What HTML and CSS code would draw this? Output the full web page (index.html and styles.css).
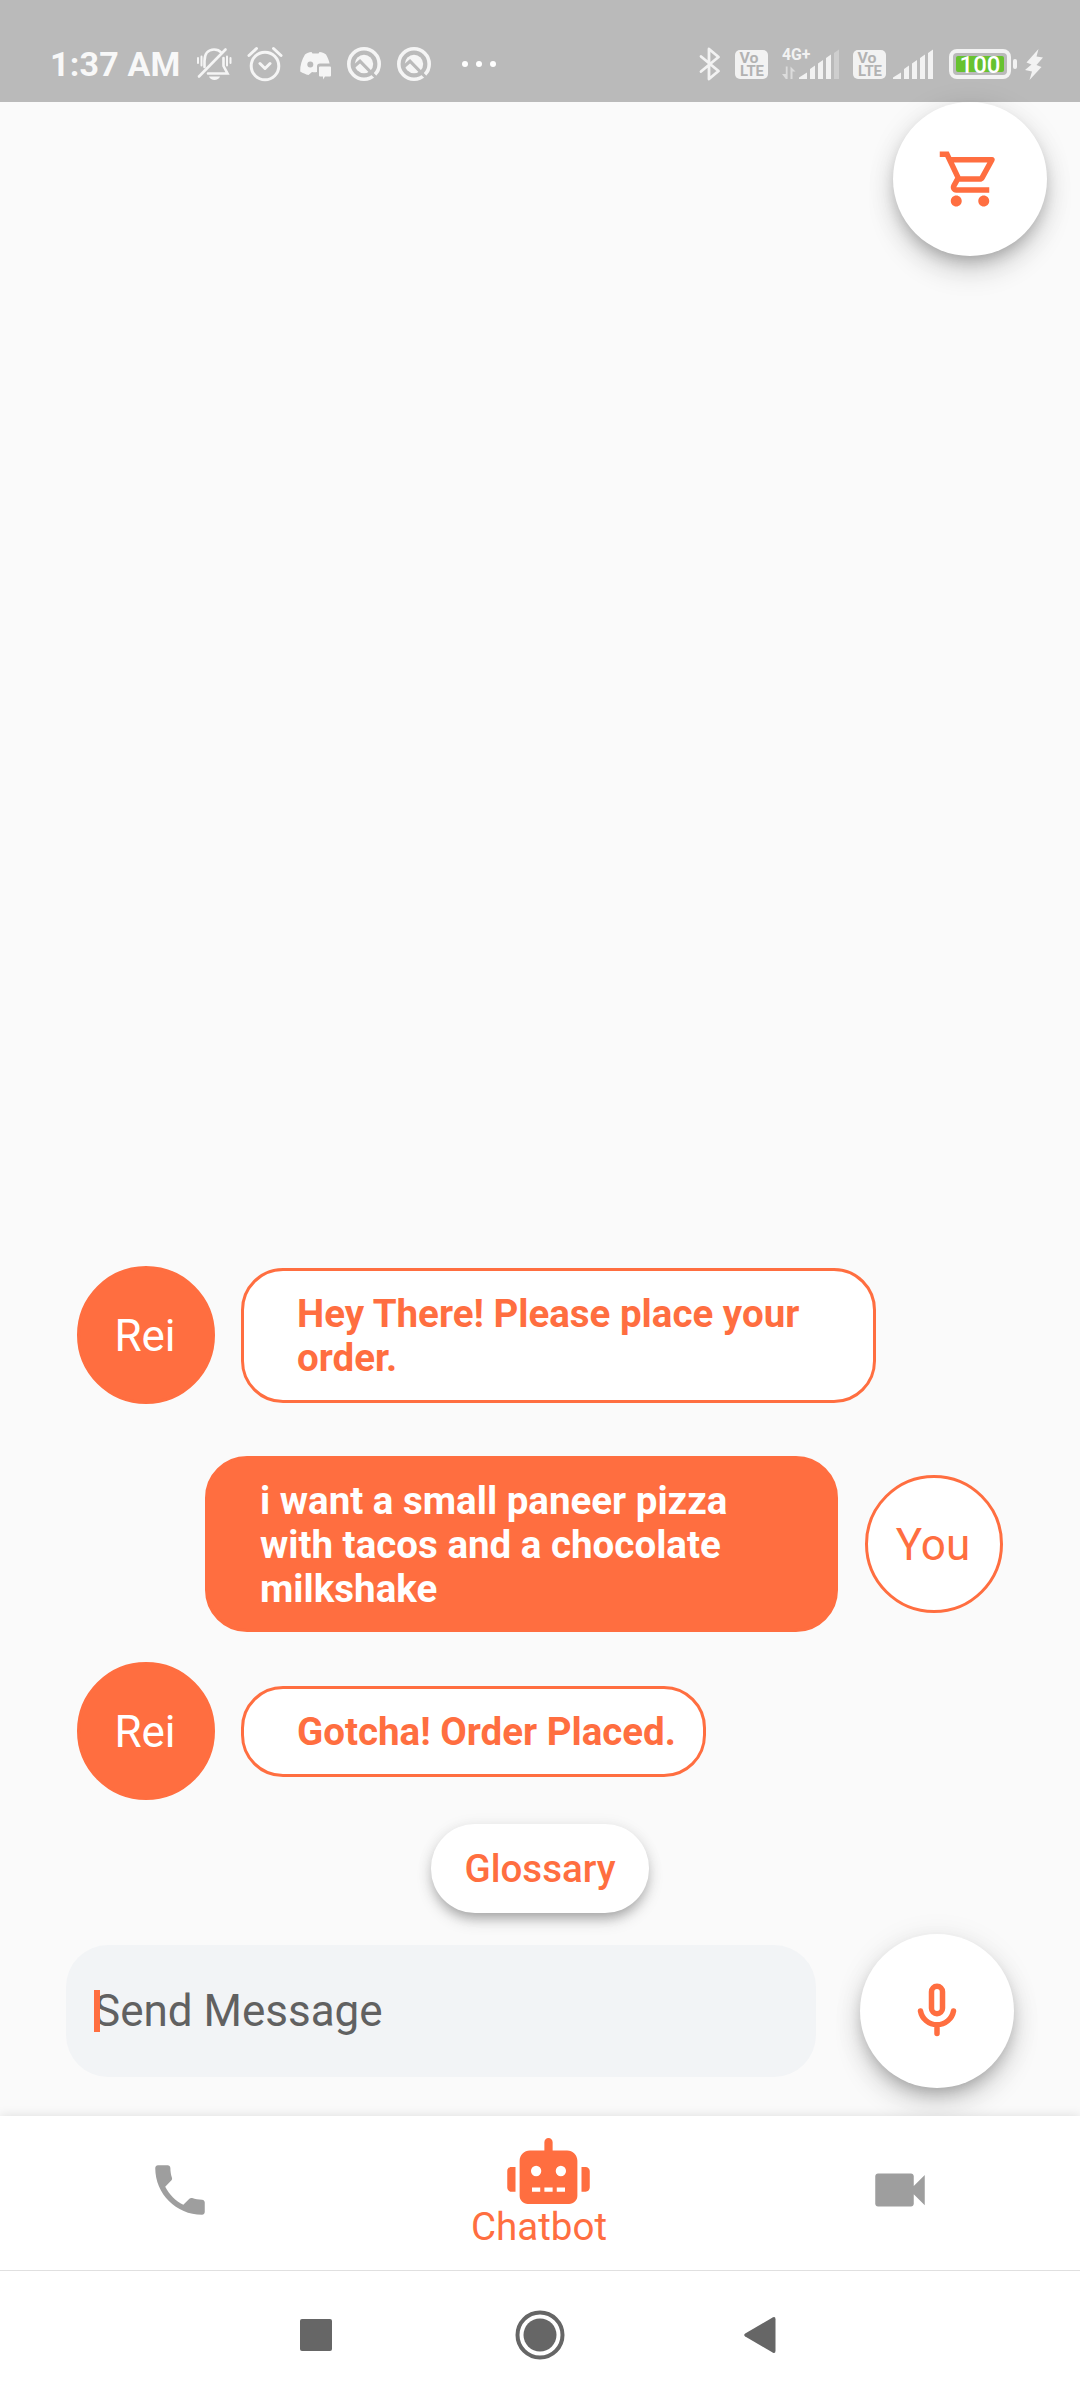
FILE: index.html
```html
<!DOCTYPE html>
<html lang="en">
<head>
  <meta charset="UTF-8" />
  <meta name="viewport" content="width=device-width, initial-scale=1" />
  <title>Chatbot</title>
  <link rel="stylesheet" href="styles.css">
</head>
<body>

  <header class="status-bar">
    <span class="clock">1:37 AM</span>
    <svg class="icon-bell" width="36" height="36" viewBox="0 0 36 36" fill="none" stroke="#f5f5f5" stroke-width="2.600" stroke-linecap="round">
      <path d="M8.500 21V15c0-7 3.500-11.500 9.500-11.500 3 0 5.500 1 7.200 3M27.500 12v8l4 7.500H12" />
      <path d="M3 30.500L29.500 3.500" />
      <path d="M2 12v5M5.500 10.500v9M31 10.500v9M34.500 12v5" stroke-width="2" />
      <path d="M13 30.500h11c-1.500 4.500-9.500 4.500-11 0z" fill="#f5f5f5" stroke="none" />
    </svg>
    <svg class="icon-alarm" width="36" height="36" viewBox="0 0 36 36" fill="none" stroke="#f5f5f5" stroke-width="3" stroke-linecap="round" stroke-linejoin="round">
      <circle cx="18" cy="20" r="13.800" />
      <path d="M2 9.500L9.500 2.500M26.500 2.500L34 9.500M13 17.500l5 5 5-5" />
    </svg>
    <svg class="icon-discord" width="34" height="30" viewBox="0 0 34 30" fill="#f5f5f5">
      <path fill-rule="evenodd" d="M6 3.500c2-1.500 4-2.200 6.500-2.500l1 1.500h6l1-1.500c2.500.3 4.500 1 6.500 2.500 1.700 3 3 6 3.600 9H21a3 3 0 0 0-3 3v5.500c-2 .3-3 .2-5 0l-3.500 3C6.500 23.300 4 22.200 1.200 20.500 1 14.500 2.800 8.500 6 3.500zM11.300 10.500a3 3 0 1 0 0 6 3 3 0 0 0 0-6z" />
      <path d="M21 15.500h10a1 1 0 0 1 1 1v8a1 1 0 0 1-1 1h-5L24 28.500v-3h-3a1 1 0 0 1-1-1v-8a1 1 0 0 1 1-1z" />
    </svg>
    <svg class="icon-app" width="34" height="34" viewBox="0 0 34 34">
      <circle cx="17" cy="17" r="15.200" fill="none" stroke="#f5f5f5" stroke-width="3.600" />
      <circle cx="17" cy="17" r="9.200" fill="#f5f5f5" />
      <path d="M7 19.500l6-5.300L29 30.500" fill="none" stroke="#bababa" stroke-width="3.200" />
    </svg>
    <svg class="icon-app" width="34" height="34" viewBox="0 0 34 34">
      <circle cx="17" cy="17" r="15.200" fill="none" stroke="#f5f5f5" stroke-width="3.600" />
      <circle cx="17" cy="17" r="9.200" fill="#f5f5f5" />
      <path d="M7 19.500l6-5.300L29 30.500" fill="none" stroke="#bababa" stroke-width="3.200" />
    </svg>
    <svg class="icon-dots" width="34" height="6" viewBox="0 0 34 6" fill="#fff">
      <circle cx="3" cy="3" r="3" /><circle cx="17" cy="3" r="3" /><circle cx="31" cy="3" r="3" />
    </svg>

    <div class="status-right">
      <svg width="22" height="34" viewBox="0 0 22 34" fill="none" stroke="#f2f2f2" stroke-width="2.800" stroke-linecap="round" stroke-linejoin="round">
        <path d="M2 9.500L19.500 24 10 32V2l9.500 8L2 24.500" />
      </svg>
      <svg class="icon-volte" width="33" height="29" viewBox="0 0 33 29">
        <rect width="33" height="29" rx="5" fill="#f2f2f2" />
        <text x="4.500" y="13" textLength="19" lengthAdjust="spacingAndGlyphs" class="volte-text">Vo</text>
        <text x="5" y="26" textLength="24" lengthAdjust="spacingAndGlyphs" class="volte-text">LTE</text>
      </svg>
      <svg class="icon-mobile" width="58" height="44" viewBox="0 -5 58 44">
        <text x="0" y="12.500" textLength="28.500" lengthAdjust="spacingAndGlyphs" class="net-text">4G+</text>
        <path d="M3.800 32V19.500H5.600V32H3.800L0 27h3.800zM8.500 32V19.500l5 5h-3V32z" fill="#dcdcdc" />
        <path d="M17 32v-1.500l8-5V32zM28 32V22l5-3.500V32zM36 32V16.500l5-3.500V32zM44 32V11l5-3.500V32z" fill="#f2f2f2" />
        <path d="M52 32V6l5-3.500V32z" fill="#cecece" />
      </svg>
      <svg class="icon-volte second" width="33" height="29" viewBox="0 0 33 29">
        <rect width="33" height="29" rx="5" fill="#f2f2f2" />
        <text x="4.500" y="13" textLength="19" lengthAdjust="spacingAndGlyphs" class="volte-text">Vo</text>
        <text x="5" y="26" textLength="24" lengthAdjust="spacingAndGlyphs" class="volte-text">LTE</text>
      </svg>
      <svg class="icon-signal" width="41" height="34" viewBox="0 0 41 34" fill="#f2f2f2">
        <path d="M0 32v-1.500l8-5V32zM11 32V22l5-3.500V32zM19 32V16.500l5-3.500V32zM27 32V11l5-3.500V32zM35 32V6l5-3.500V32z" />
      </svg>
      <div class="battery"><span class="battery-level">100</span></div>
      <div class="battery-tip"></div>
      <svg class="icon-bolt" width="18" height="31" viewBox="0 0 18 31" fill="#f2f2f2">
        <path d="M13.500 0L1.500 13.500l5 2L0 21l7 1.500L4.500 31 16.500 18l-5-2L18 8.500l-6.500-1z" />
      </svg>
    </div>
  </header>

  <main class="chat">
    <button class="round-btn cart-btn" aria-label="Cart">
      <svg width="66" height="66" viewBox="0 0 24 24" fill="#ff6e40">
        <path d="M15.550 13c.75 0 1.410-.41 1.750-1.030l3.580-6.490A.996.996 0 0 0 20.010 4H5.210l-.94-2H1v2h2l3.600 7.590-1.350 2.440C4.520 15.370 5.480 17 7 17h12v-2H7l1.100-2h7.450zM6.160 6h12.150l-2.760 5H8.530L6.160 6zM7 18c-1.100 0-1.990.9-1.990 2S5.900 22 7 22s2-.9 2-2-.9-2-2-2zm10 0c-1.100 0-1.990.9-1.990 2s.89 2 1.990 2 2-.9 2-2-.9-2-2-2z" />
      </svg>
    </button>

    <div class="messages">
      <div class="message bot">
        <div class="avatar">Rei</div>
        <p class="bubble">Hey There! Please place your order.</p>
      </div>
      <div class="message user">
        <p class="bubble">i want a small paneer pizza with tacos and a chocolate milkshake</p>
        <div class="avatar">You</div>
      </div>
      <div class="message bot">
        <div class="avatar">Rei</div>
        <p class="bubble">Gotcha! Order Placed.</p>
      </div>
    </div>

    <button class="glossary-btn">Glossary</button>

    <div class="composer">
      <div class="input-box">
        <span class="placeholder">Send Message</span>
        <span class="caret"></span>
      </div>
      <button class="round-btn" aria-label="Speak">
        <svg width="66" height="66" viewBox="0 0 24 24" fill="none" stroke="#ff6e40" stroke-width="2" stroke-linecap="round">
          <rect x="10" y="3" width="4" height="10" rx="2" />
          <path d="M6 12c.5 2.800 3 5 6 5s5.500-2.200 6-5M12 17.500V20.200" />
        </svg>
      </button>
    </div>
  </main>

  <nav class="tab-bar">
    <div class="tab">
      <svg width="66" height="66" viewBox="0 0 24 24" fill="#9e9e9e">
        <path d="M6.620 10.790c1.440 2.830 3.760 5.140 6.590 6.590l2.200-2.200c.27-.27.67-.36 1.020-.24 1.120.37 2.330.57 3.570.57.55 0 1 .45 1 1V20c0 .55-.45 1-1 1-9.390 0-17-7.610-17-17 0-.55.45-1 1-1h3.500c.55 0 1 .45 1 1 0 1.250.2 2.450.57 3.570.11.35.03.74-.25 1.020l-2.200 2.200z" />
      </svg>
    </div>
    <div class="tab active">
      <svg class="icon-robot" width="83" height="66" viewBox="0 0 640 512" fill="#ff6e40">
        <path d="M32 224h32v192H32c-17.700 0-32-14.300-32-32V256c0-17.700 14.300-32 32-32zM608 224h-32v192h32c17.700 0 32-14.300 32-32V256c0-17.700-14.300-32-32-32z" />
        <path fill-rule="evenodd" d="M176 96h112V32c0-17.700 14.300-32 32-32s32 14.300 32 32v64h112c44.200 0 80 35.800 80 80v272c0 35.300-28.700 64-64 64H160c-35.300 0-64-28.700-64-64V176c0-44.200 35.800-80 80-80zM224 216a40 40 0 1 0 0 80 40 40 0 0 0 0-80zM416 216a40 40 0 1 0 0 80 40 40 0 0 0 0-80zM192 384v32h64v-32zM288 384v32h64v-32zM384 384v32h64v-32z" />
      </svg>
      <span class="tab-label">Chatbot</span>
    </div>
    <div class="tab">
      <svg width="66" height="66" viewBox="0 0 24 24" fill="#9e9e9e">
        <path d="M17 10.500V7c0-.55-.45-1-1-1H4c-.55 0-1 .45-1 1v10c0 .55.45 1 1 1h12c.55 0 1-.45 1-1v-3.500l4 4v-11l-4 4z" />
      </svg>
    </div>
  </nav>

  <footer class="system-nav">
    <svg width="32" height="32" viewBox="0 0 32 32" fill="#666">
      <rect width="32" height="32" rx="2" />
    </svg>
    <svg class="icon-home" width="50" height="50" viewBox="0 0 50 50">
      <circle cx="25" cy="25" r="22.500" fill="none" stroke="#666" stroke-width="4" />
      <circle cx="25" cy="25" r="16.500" fill="#666" />
    </svg>
    <svg width="32" height="38" viewBox="0 0 32 38" fill="#666">
      <path d="M29 1.200L1.200 17.500q-2 1.500 0 3L29 36.800q2.500 1 2.500-2V3.200q0-3-2.500-2z" />
    </svg>
  </footer>

</body>
</html>
```

FILE: styles.css
```css
* {
  box-sizing: border-box;
}

body {
  margin: 0;
  height: 2400px;
  display: flex;
  flex-direction: column;
  background: #fafafa;
  font-family: Roboto, sans-serif;
  overflow: hidden;
}

svg {
  display: block;
  flex-shrink: 0;
}

button {
  border: none;
  padding: 0;
  font-family: inherit;
  cursor: pointer;
}

/* status bar */
.status-bar {
  height: 102px;
  flex-shrink: 0;
  background: #bababa;
  display: flex;
  align-items: center;
  padding: 26px 37px 0 50px;
}

.clock {
  width: 146px;
  font-size: 34px;
  font-weight: 700;
  line-height: 40px;
  color: #f8f8f8;
  letter-spacing: 0.2px;
}

.icon-alarm {
  margin-left: 15px;
}

.icon-discord {
  margin: 4px 0 0 16px;
}

.icon-app {
  margin-left: 14px;
}

.icon-app + .icon-app {
  margin-left: 16px;
}

.icon-dots {
  margin-left: 31px;
}

.status-right {
  margin-left: auto;
  display: flex;
  align-items: center;
}

.icon-volte {
  margin: 1px 0 0 14px;
}

.icon-volte.second {
  margin-left: 13px;
}

.volte-text {
  font-size: 14px;
  font-weight: 700;
  fill: #b2b2b2;
}

.net-text {
  font-size: 16px;
  font-weight: 700;
  fill: #f2f2f2;
}

.icon-mobile {
  margin-left: 14px;
}

.icon-signal {
  margin-left: 7px;
}

.battery {
  width: 62px;
  height: 30px;
  margin-left: 15px;
  border: 4px solid #f2f2f2;
  border-radius: 8px;
  padding: 3px;
}

.battery-level {
  display: block;
  height: 16px;
  border-radius: 2px;
  background: #67c22f;
  color: #fff;
  font-size: 24px;
  font-weight: 500;
  line-height: 18px;
  text-align: center;
}

.battery-tip {
  width: 4px;
  height: 10px;
  margin-left: 2px;
  border-radius: 2px;
  background: #f2f2f2;
}

.icon-bolt {
  margin-left: 8px;
}

/* chat */
.chat {
  flex: 1;
  display: flex;
  flex-direction: column;
}

.round-btn {
  width: 154px;
  height: 154px;
  flex-shrink: 0;
  border-radius: 50%;
  background: #fff;
  box-shadow: 0 8px 14px -3px rgba(0,0,0,0.2), 0 16px 28px rgba(0,0,0,0.14), 0 3px 30px rgba(0,0,0,0.08);
  display: flex;
  justify-content: center;
  align-items: center;
}

.cart-btn {
  align-self: flex-end;
  margin-right: 33px;
}

.messages {
  flex: 1;
  display: flex;
  flex-direction: column;
  justify-content: flex-end;
  padding: 0 77px 24px;
}

.message {
  display: flex;
  align-items: center;
  gap: 26px;
}

.message.user {
  justify-content: flex-end;
  gap: 27px;
  margin: 52px 0 30px;
}

.avatar {
  width: 138px;
  height: 138px;
  flex-shrink: 0;
  border: 3px solid #ff6e40;
  border-radius: 50%;
  background: #ff6e40;
  color: #fff;
  font-size: 44px;
  padding: 1px 2px 0 0;
  display: flex;
  justify-content: center;
  align-items: center;
}

.bubble {
  margin: 0;
  max-width: 635px;
  padding: 21px 27px 20px 53px;
  border: 3px solid #ff6e40;
  border-radius: 42px;
  background: #fff;
  color: #ff6e40;
  font-size: 38.500px;
  font-weight: 700;
  line-height: 44px;
}

.user .avatar {
  background: #fff;
  color: #ff6e40;
}

.user .bubble {
  max-width: 633px;
  padding: 20px 27px 18px 52px;
  background: #ff6e40;
  color: #fff;
}

.glossary-btn {
  align-self: center;
  width: 218px;
  height: 89px;
  border-radius: 44px;
  background: #fff;
  color: #ff6e40;
  font-size: 38.500px;
  font-weight: 500;
  box-shadow: 0 8px 11px -4px rgba(0,0,0,0.2), 0 8px 16px rgba(0,0,0,0.14), 0 2px 16px rgba(0,0,0,0.08);
}

.composer {
  display: flex;
  align-items: center;
  gap: 44px;
  padding: 21px 66px 28px;
}

.input-box {
  position: relative;
  flex: 1;
  height: 132px;
  border-radius: 42px;
  background: #f2f4f6;
  display: flex;
  align-items: center;
  padding: 0 28px;
}

.placeholder {
  color: #616161;
  font-size: 44px;
}

.caret {
  position: absolute;
  left: 28px;
  top: 45px;
  width: 6px;
  height: 42px;
  background: #ff6e40;
}

/* bottom tabs */
.tab-bar {
  height: 154px;
  flex-shrink: 0;
  display: grid;
  grid-template-columns: repeat(3, 1fr);
  background: #fff;
  box-shadow: 0 -1px 10px rgba(0,0,0,0.1);
  position: relative;
}

.tab {
  display: flex;
  flex-direction: column;
  align-items: center;
  padding-top: 41px;
}

.tab.active {
  padding-top: 22px;
  color: #ff6e40;
  font-size: 38.500px;
  line-height: 44px;
}

.icon-robot {
  margin-left: 17px;
}

.tab-label {
  margin: 1px 2px 0 0;
}

.system-nav {
  height: 130px;
  flex-shrink: 0;
  border-top: 1px solid #e0e0e0;
  background: #fff;
  display: flex;
  justify-content: space-between;
  align-items: center;
  padding: 0 304px 1px 300px;
  position: relative;
}

.icon-home {
  margin-left: 4px;
}
```
